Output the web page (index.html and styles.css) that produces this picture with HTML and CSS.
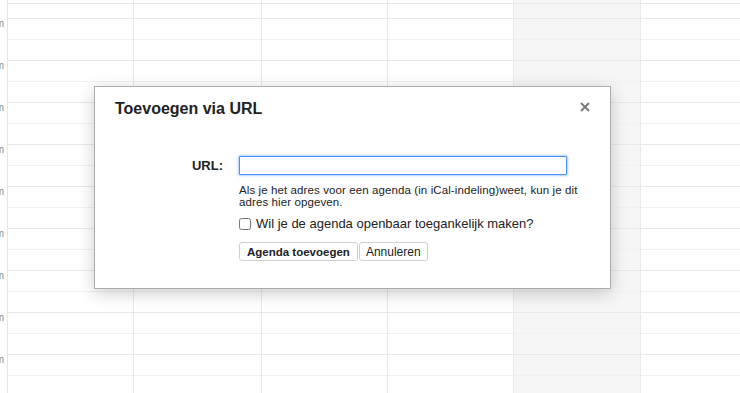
FILE: index.html
```html
<!DOCTYPE html>
<html lang="nl">

<head>
    <meta charset="UTF-8">
    <title>Toevoegen via URL</title>
    <link rel="stylesheet" href="styles.css">
</head>

<body>
    <div class="calendar">
        <div class="times">
            <div class="time">pm</div>
            <div class="time">pm</div>
            <div class="time">pm</div>
            <div class="time">pm</div>
            <div class="time">pm</div>
            <div class="time">pm</div>
            <div class="time">pm</div>
            <div class="time">pm</div>
            <div class="time">pm</div>
        </div>
        <div class="day"></div>
        <div class="day wide"></div>
        <div class="day"></div>
        <div class="day"></div>
        <div class="day today"></div>
        <div class="day last"></div>
    </div>

    <div class="dialog">
        <div class="dialog-header">
            <h2>Toevoegen via URL</h2>
            <span class="close">
                <svg width="10" height="10" viewBox="0 0 10 10">
                    <path d="M1 1 L9 9 M9 1 L1 9" stroke="#777" stroke-width="1.8" fill="none"/>
                </svg>
            </span>
        </div>
        <form class="dialog-body" onsubmit="return false">
            <label for="url" class="field-label">URL:</label>
            <div class="field">
                <input type="text" id="url" name="url">
                <p class="hint">Als je het adres voor een agenda (in iCal-indeling)weet, kun je dit adres hier opgeven.</p>
                <label class="check">
                    <input type="checkbox" name="public">
                    <span>Wil je de agenda openbaar toegankelijk maken?</span>
                </label>
                <div class="buttons">
                    <button type="submit" class="btn primary">Agenda toevoegen</button>
                    <button type="button" class="btn">Annuleren</button>
                </div>
            </div>
        </form>
    </div>
</body>

</html>
```

FILE: styles.css
```css
body {
    margin: 0;
    font-family: "Liberation Sans", Arial, sans-serif;
    color: #222;
    background-color: #fff;
    overflow: hidden;
}

/* calendar grid behind the dialog */
.calendar {
    display: flex;
    height: 393px;
}

.times {
    width: 4px;
    flex: none;
    padding-top: 18px;
    padding-right: 3px;
    border-right: 1px solid #e6e6e6;
}

.time {
    height: 42px;
    display: flex;
    justify-content: flex-end;
    font-size: 10px;
    color: #888;
    overflow: hidden;
    white-space: nowrap;
}

.day {
    width: 125px;
    flex: none;
    border-right: 1px solid #e9e9e9;
    background-image: repeating-linear-gradient(to bottom,
            #e8e8e8 0, #e8e8e8 1px,
            transparent 1px, transparent 21px,
            #f1f1f1 21px, #f1f1f1 22px,
            transparent 22px, transparent 42px);
    background-position: 0 18px;
}

.day.wide {
    width: 127px;
}

.today {
    width: 126px;
    background-color: #f6f6f6;
}

.last {
    flex: 1;
    border-right: none;
}

/* dialog */
.dialog {
    position: absolute;
    left: 94px;
    top: 86px;
    width: 515px;
    height: 201px;
    background-color: #fff;
    border: 1px solid #acacac;
    box-shadow: 0 4px 16px rgba(0, 0, 0, 0.2);
}

.dialog-header {
    display: flex;
    justify-content: space-between;
    align-items: flex-start;
    padding: 13px 20px 0 20px;
}

.dialog-header h2 {
    margin: 0;
    font-size: 16px;
    font-weight: bold;
    color: #222;
}

.close {
    display: block;
    margin-top: 2px;
    margin-right: 0;
    line-height: 0;
    cursor: pointer;
}

.dialog-body {
    display: grid;
    grid-template-columns: 108px 1fr;
    column-gap: 16px;
    padding: 38px 20px 0 20px;
}

.field-label {
    text-align: right;
    font-size: 13px;
    font-weight: bold;
    padding-top: 2px;
}

.field input[type="text"] {
    display: block;
    box-sizing: border-box;
    width: 328px;
    height: 19px;
    margin: 0;
    padding: 1px 4px;
    border: 1px solid #4d90fe;
    box-shadow: 0 0 2px 1px rgba(77, 144, 254, 0.45);
    border-radius: 1px;
    outline: none;
}

.hint {
    width: 350px;
    margin: 9px 0 0 0;
    font-size: 11.5px;
    letter-spacing: 0.1px;
    line-height: 12px;
    color: #222;
}

.check {
    display: flex;
    align-items: center;
    gap: 5px;
    margin-top: 8px;
    font-size: 13px;
}

.check input {
    margin: 0;
    width: 12px;
    height: 12px;
}

.buttons {
    display: flex;
    gap: 1px;
    margin-top: 11px;
}

.btn {
    height: 19px;
    padding: 0 6px;
    font-family: "Liberation Sans", Arial, sans-serif;
    font-size: 12px;
    color: #222;
    background-color: #fff;
    border: 1px solid #d0d0d0;
    border-radius: 3px;
}

.btn.primary {
    font-weight: bold;
    font-size: 11.5px;
    padding: 0 7px;
}
```
